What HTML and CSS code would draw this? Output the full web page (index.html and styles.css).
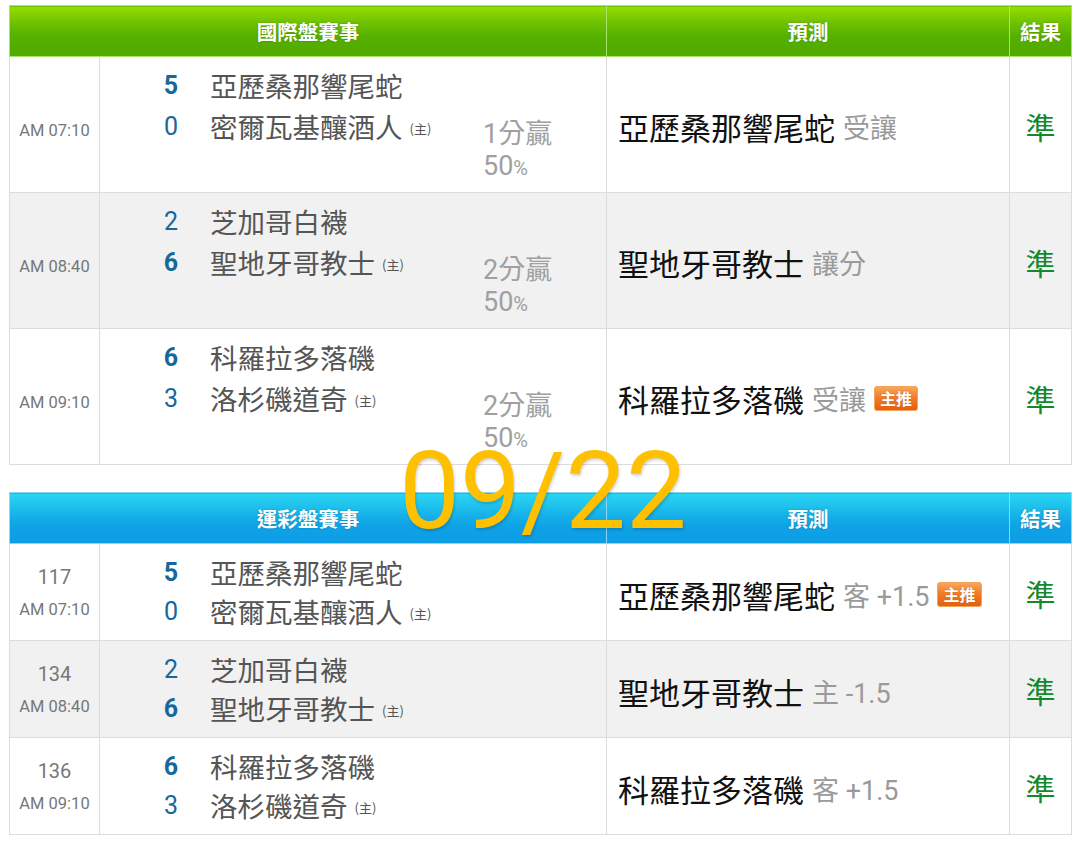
FILE: index.html
```html
<!DOCTYPE html>
<html lang="zh-Hant">
<head>
<meta charset="utf-8">
<title>賽事預測</title>
<link rel="stylesheet" href="styles.css">
</head>
<body>
<div class="page">
  <table class="board intl">
    <colgroup><col class="c-time"><col class="c-match"><col class="c-pred"><col class="c-res"></colgroup>
    <thead>
      <tr><th colspan="2">國際盤賽事</th><th>預測</th><th>結果</th></tr>
    </thead>
    <tbody>
      <tr>
        <td class="time"><div class="cell-in">AM 07:10</div></td>
        <td class="match">
          <div class="match-inner">
            <div class="teams">
              <div class="line"><span class="score win">5</span><span class="team">亞歷桑那響尾蛇</span></div>
              <div class="line"><span class="score">0</span><span class="team">密爾瓦基釀酒人</span><span class="home">(主)</span></div>
            </div>
            <div class="margin">1分贏<br>50<span class="pct">%</span></div>
          </div>
        </td>
        <td class="pred"><div class="cell-in"><span class="pick">亞歷桑那響尾蛇</span><span class="note">受讓</span></div></td>
        <td class="res"><div class="cell-in">準</div></td>
      </tr>
      <tr class="alt">
        <td class="time"><div class="cell-in">AM 08:40</div></td>
        <td class="match">
          <div class="match-inner">
            <div class="teams">
              <div class="line"><span class="score">2</span><span class="team">芝加哥白襪</span></div>
              <div class="line"><span class="score win">6</span><span class="team">聖地牙哥教士</span><span class="home">(主)</span></div>
            </div>
            <div class="margin">2分贏<br>50<span class="pct">%</span></div>
          </div>
        </td>
        <td class="pred"><div class="cell-in"><span class="pick">聖地牙哥教士</span><span class="note">讓分</span></div></td>
        <td class="res"><div class="cell-in">準</div></td>
      </tr>
      <tr>
        <td class="time"><div class="cell-in">AM 09:10</div></td>
        <td class="match">
          <div class="match-inner">
            <div class="teams">
              <div class="line"><span class="score win">6</span><span class="team">科羅拉多落磯</span></div>
              <div class="line"><span class="score">3</span><span class="team">洛杉磯道奇</span><span class="home">(主)</span></div>
            </div>
            <div class="margin">2分贏<br>50<span class="pct">%</span></div>
          </div>
        </td>
        <td class="pred"><div class="cell-in"><span class="pick">科羅拉多落磯</span><span class="note">受讓</span><span class="badge">主推</span></div></td>
        <td class="res"><div class="cell-in">準</div></td>
      </tr>
    </tbody>
  </table>

  <table class="board lottery">
    <colgroup><col class="c-time"><col class="c-match"><col class="c-pred"><col class="c-res"></colgroup>
    <thead>
      <tr><th colspan="2">運彩盤賽事</th><th>預測</th><th>結果</th></tr>
    </thead>
    <tbody>
      <tr>
        <td class="time"><div class="cell-in"><div class="num">117</div><div class="clock">AM 07:10</div></div></td>
        <td class="match">
          <div class="teams">
            <div class="line"><span class="score win">5</span><span class="team">亞歷桑那響尾蛇</span></div>
            <div class="line"><span class="score">0</span><span class="team">密爾瓦基釀酒人</span><span class="home">(主)</span></div>
          </div>
        </td>
        <td class="pred"><div class="cell-in"><span class="pick">亞歷桑那響尾蛇</span><span class="note">客 +1.5</span><span class="badge">主推</span></div></td>
        <td class="res"><div class="cell-in">準</div></td>
      </tr>
      <tr class="alt">
        <td class="time"><div class="cell-in"><div class="num">134</div><div class="clock">AM 08:40</div></div></td>
        <td class="match">
          <div class="teams">
            <div class="line"><span class="score">2</span><span class="team">芝加哥白襪</span></div>
            <div class="line"><span class="score win">6</span><span class="team">聖地牙哥教士</span><span class="home">(主)</span></div>
          </div>
        </td>
        <td class="pred"><div class="cell-in"><span class="pick">聖地牙哥教士</span><span class="note">主 -1.5</span></div></td>
        <td class="res"><div class="cell-in">準</div></td>
      </tr>
      <tr>
        <td class="time"><div class="cell-in"><div class="num">136</div><div class="clock">AM 09:10</div></div></td>
        <td class="match">
          <div class="teams">
            <div class="line"><span class="score win">6</span><span class="team">科羅拉多落磯</span></div>
            <div class="line"><span class="score">3</span><span class="team">洛杉磯道奇</span><span class="home">(主)</span></div>
          </div>
        </td>
        <td class="pred"><div class="cell-in"><span class="pick">科羅拉多落磯</span><span class="note">客 +1.5</span></div></td>
        <td class="res"><div class="cell-in">準</div></td>
      </tr>
    </tbody>
  </table>

  <div class="date-stamp">09/22</div>
</div>
</body>
</html>
```

FILE: styles.css
```css
html, body {
  margin: 0;
  padding: 0;
  background: #ffffff;
}

body {
  font-family: Roboto, "Noto Sans CJK TC", "Noto Sans", sans-serif;
  color: #555;
}

.page {
  position: relative;
  width: 1080px;
  height: 845px;
  padding: 5px 0 0 9px;
  box-sizing: border-box;
}

.board {
  width: 1062px;
  table-layout: fixed;
  border-collapse: collapse;
}

.board + .board {
  margin-top: 27px;
}

.c-time { width: 90px; }
.c-match { width: 507px; }
.c-pred { width: 403px; }
.c-res { width: 62px; }

.board th {
  height: 50px;
  padding: 0;
  color: #fff;
  font-family: "Noto Sans CJK TC", sans-serif;
  font-size: 20.5px;
  font-weight: 700;
  text-align: center;
  text-shadow: 0 0 2px rgba(0, 0, 0, 0.25);
}

.intl th {
  background: linear-gradient(#97dd00 0%, #6cc000 35%, #55b000 60%, #50aa00 100%);
  border: 1px solid #a8e46c;
}

.lottery th {
  background: linear-gradient(#2ad6f2 0%, #18b4ea 40%, #0fa2e6 65%, #0c9de5 100%);
  border: 1px solid #8cd8f4;
}

.board td {
  border: 1px solid #dcdcdc;
  padding: 0;
  vertical-align: middle;
}

.intl td { height: 135px; }
.lottery td { height: 96px; }

.board tr.alt td {
  background: #f1f1f1;
}

.time {
  text-align: center;
  color: #777;
  font-size: 16.5px;
}

.intl .time .cell-in {
  padding-top: 12px;
}

.lottery .time .cell-in {
  padding-top: 9px;
}

.time .num {
  font-size: 20px;
  line-height: 26px;
}

.time .clock {
  font-size: 16.5px;
  line-height: 40px;
}

.match {
  padding-left: 50px !important;
}

.match-inner {
  display: flex;
  align-items: flex-start;
}

.teams {
  flex: none;
  width: 333px;
}

.intl .line {
  height: 41px;
  line-height: 41px;
}

.lottery .line {
  height: 39px;
  line-height: 39px;
}

.line {
  display: flex;
  align-items: center;
  white-space: nowrap;
}

.score {
  flex: none;
  width: 42px;
  text-align: center;
  font-size: 25px;
  color: #17679b;
}

.score.win {
  font-weight: 700;
}

.team {
  margin-left: 18px;
  font-family: "Noto Sans CJK TC", sans-serif;
  font-size: 27.5px;
  color: #555;
}

.home {
  margin-left: 7px;
  margin-top: 4px;
  font-family: "Noto Sans CJK TC", sans-serif;
  font-size: 13px;
  color: #555;
}

.margin {
  margin-top: 53px;
  font-size: 27px;
  line-height: 32px;
  color: #a0a0a0;
  font-family: Roboto, "Noto Sans CJK TC", sans-serif;
}

.margin .pct {
  font-size: 20px;
}

.pred {
  padding-left: 11px !important;
  white-space: nowrap;
}

.pred .cell-in {
  padding-top: 4px;
}

.pick {
  font-family: "Noto Sans CJK TC", sans-serif;
  font-size: 31px;
  color: #111;
  vertical-align: middle;
}

.note {
  margin-left: 8px;
  font-size: 27px;
  color: #9a9a9a;
  vertical-align: middle;
}

.badge {
  display: inline-block;
  margin-left: 8px;
  padding: 0 5px;
  height: 23px;
  line-height: 23px;
  border: 1px solid #f3a45c;
  border-radius: 3px;
  background: linear-gradient(#f9a65a 0%, #f07c2a 45%, #e4600c 100%);
  color: #fff;
  font-family: "Noto Sans CJK TC", sans-serif;
  font-size: 16px;
  font-weight: 700;
  vertical-align: middle;
  text-shadow: 0 0 1px rgba(120, 40, 0, 0.6);
}

.res {
  text-align: center;
  font-family: "Noto Sans CJK TC", sans-serif;
  font-size: 30px;
  color: #14882b;
}

.res .cell-in {
  padding-top: 2px;
}

.date-stamp {
  position: absolute;
  top: 437px;
  left: 6px;
  right: 0;
  text-align: center;
  font-family: Roboto, sans-serif;
  font-weight: 400;
  font-size: 108px;
  line-height: 108px;
  color: #ffc000;
  text-shadow: 1px 2px 3px rgba(0, 0, 0, 0.18);
  pointer-events: none;
}
```
